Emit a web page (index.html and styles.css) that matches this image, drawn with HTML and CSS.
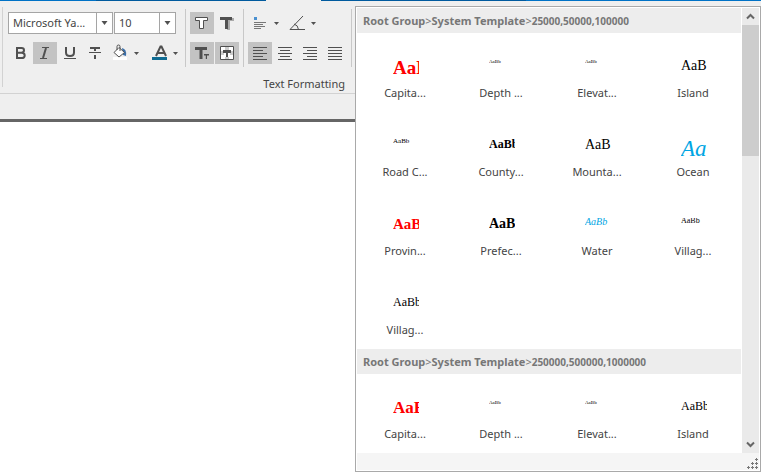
FILE: index.html
```html
<!DOCTYPE html>
<html lang="en">
<head>
<meta charset="utf-8">
<title>Text Formatting</title>
<link rel="stylesheet" href="styles.css">
</head>
<body>
<div class="tabs"><span class="tab-blue"></span><span class="tab-dark"></span><span class="tab-active"></span><span class="tab-dark wide"></span><span class="tab-rest"></span></div>
<header class="ribbon">
  <div class="groups">
    <div class="group fonts">
      <div class="row combos">
        <span class="combo family"><select aria-label="Font"><option>Microsoft Ya...</option></select><svg class="arrow" viewBox="0 0 7 4"><path d="M0.5 0h6L3.5 4z"/></svg></span>
        <span class="combo size"><select aria-label="Font size"><option>10</option></select><svg class="arrow" viewBox="0 0 7 4"><path d="M0.5 0h6L3.5 4z"/></svg></span>
      </div>
      <div class="row">
        <button class="tool" aria-label="Bold"><svg viewBox="0 0 24 22"><path class="l2" d="M9 6v10M8 6h5.500q2.500 0 2.500 2.300T13.500 10.800H9M13.500 10.800q3.200 0 3.200 2.600T13.500 16H8"/></svg></button>
        <button class="tool on" aria-label="Italic"><svg viewBox="0 0 24 22"><path class="l2" d="M13 6l-3 10"/><path class="l1" d="M9 5.500h7M7 16.500h7"/></svg></button>
        <button class="tool" aria-label="Underline"><svg viewBox="0 0 24 22"><path class="l2" d="M8 5v5.500q0 3.500 4 3.500t4-3.500V5"/><path class="l1" d="M6 16.500h12"/></svg></button>
        <button class="tool" aria-label="Strikethrough"><svg viewBox="0 0 24 22"><path class="l2" d="M7 6h10M12 6v3M12 13v4"/><path class="l1" d="M6 10.500h12"/></svg></button>
        <button class="tool split" aria-label="Background color"><svg viewBox="0 0 32 22"><path fill="#3a6ea8" d="M14 6q5 1 4 8l-3-1z"/><path fill="#fff" d="M5 15h14v3H5z"/><path fill="#fff" class="l1" d="M6 10.500l5-5 5.500 5-5.500 4.500z"/><path class="l1" d="M9 8V4.500q0-1.500 1.500-1.500T12 4.500V9"/><path d="M26 10h5l-2.500 3z"/></svg></button>
        <button class="tool split" aria-label="Font color"><svg viewBox="0 0 32 22"><path class="l2" d="M7 14l4.500-9.500h1l4.500 9.500M9 11h6"/><path fill="#0e6b92" d="M3 15h15v3H3z"/><path d="M24 10h5l-2.500 3z"/></svg></button>
      </div>
    </div>
    <div class="group effects">
      <div class="row">
        <button class="tool on" aria-label="Outline"><svg viewBox="0 0 24 22"><path fill="#fff" class="l1" d="M5.500 5.500h12v3h-4v8h-4v-8h-4z"/></svg></button>
        <button class="tool" aria-label="Shadow"><svg viewBox="0 0 24 22"><path fill="#aaa" d="M7 6h12v3h-4v9h-3V9z"/><path d="M5 5h12v3h-4v9h-3V8H5z"/></svg></button>
      </div>
      <div class="row">
        <button class="tool on" aria-label="Fixed size"><svg viewBox="0 0 24 22"><path d="M5 5h12v3h-4.500v9h-3V8H5zM14 12h5v1.500h-2V17h-1.200v-3.500H14z"/></svg></button>
        <button class="tool on" aria-label="Text background"><svg viewBox="0 0 24 22"><path class="l1" fill="#fff" d="M5.500 4.500h13v13h-13z"/><path fill="#ccc" d="M6 9h3v4H6zM15 9h3v4h-3zM10 5h4v3h-4zM10 15h4v2h-4z"/><path d="M8 8h8v3h-3v4h-2v-4H8z"/></svg></button>
      </div>
    </div>
    <div class="group para">
      <div class="row">
        <button class="tool wide" aria-label="Anchor position"><svg viewBox="0 0 37 22"><path fill="#4a90d0" d="M6 5h3v3H6z"/><path class="l1 soft" d="M6 10.500h12M6 12.500h9M6 14.500h11M6 16.500h7"/><path d="M26 10h5l-2.500 3z"/></svg></button>
        <button class="tool wide" aria-label="Rotation"><svg viewBox="0 0 37 22"><path class="l1" d="M18 4L5 17.500h15M9 12q4 1 4.500 5.500"/><path d="M26 10h5l-2.500 3z"/></svg></button>
      </div>
      <div class="row">
        <button class="tool on" aria-label="Align left"><svg viewBox="0 0 24 22"><path class="l1" d="M5 5.500h14M5 8.500h10M5 11.500h14M5 14.500h10M5 17.500h14"/></svg></button>
        <button class="tool" aria-label="Align center"><svg viewBox="0 0 24 22"><path class="l1" d="M5 5.500h14M7 8.500h10M5 11.500h14M7 14.500h10M5 17.500h14"/></svg></button>
        <button class="tool" aria-label="Align right"><svg viewBox="0 0 24 22"><path class="l1" d="M5 5.500h14M9 8.500h10M5 11.500h14M9 14.500h10M5 17.500h14"/></svg></button>
        <button class="tool" aria-label="Justify"><svg viewBox="0 0 24 22"><path class="l1" d="M5 5.500h14M5 8.500h14M5 11.500h14M5 14.500h14M5 17.500h14"/></svg></button>
      </div>
    </div>
  </div>
  <div class="caption">Text Formatting</div>
</header>
<div class="dock"></div>
<main class="canvas"></main>
<section class="gallery" aria-label="Text styles">
  <div class="view">
    <div class="list">
      <h2>Root Group<i>&gt;</i>System Template<i>&gt;</i><span class="scale">25000,50000,100000</span></h2>
      <div class="grid">
        <button class="style"><span class="sample s19 b red">AaBb</span><span class="name">Capita...</span></button>
        <button class="style"><span class="sample s5">AaBb</span><span class="name">Depth ...</span></button>
        <button class="style"><span class="sample s5">AaBb</span><span class="name">Elevat...</span></button>
        <button class="style"><span class="sample s14">AaB</span><span class="name">Island</span></button>
        <button class="style"><span class="sample s7">AaBb</span><span class="name">Road C...</span></button>
        <button class="style"><span class="sample s12 b">AaBb</span><span class="name">County...</span></button>
        <button class="style"><span class="sample s14">AaB</span><span class="name">Mounta...</span></button>
        <button class="style"><span class="sample s23 water">Aa</span><span class="name">Ocean</span></button>
        <button class="style"><span class="sample s15 b red">AaBb</span><span class="name">Provin...</span></button>
        <button class="style"><span class="sample s14 b">AaB</span><span class="name">Prefec...</span></button>
        <button class="style"><span class="sample s10 water">AaBb</span><span class="name">Water</span></button>
        <button class="style"><span class="sample s8">AaBb</span><span class="name">Villag...</span></button>
        <button class="style"><span class="sample s12">AaBb</span><span class="name">Villag...</span></button>
      </div>
      <h2>Root Group<i>&gt;</i>System Template<i>&gt;</i><span class="scale">250000,500000,1000000</span></h2>
      <div class="grid">
        <button class="style"><span class="sample s17 b red">AaBb</span><span class="name">Capita...</span></button>
        <button class="style"><span class="sample s5">AaBb</span><span class="name">Depth ...</span></button>
        <button class="style"><span class="sample s5">AaBb</span><span class="name">Elevat...</span></button>
        <button class="style"><span class="sample s12">AaBb</span><span class="name">Island</span></button>
      </div>
    </div>
    <div class="scrollbar">
      <button class="step" aria-label="Scroll up"><svg viewBox="0 0 17 17"><path d="M5 10.500l3.500-3.500 3.500 3.500"/></svg></button>
      <div class="thumb"></div>
      <button class="step down" aria-label="Scroll down"><svg viewBox="0 0 17 17"><path d="M5 6.500l3.500 3.500 3.500-3.500"/></svg></button>
    </div>
  </div>
  <div class="footer"><svg class="grip" viewBox="0 0 12 12"><path d="M9.500 0v3M8 1.500h3M9.500 4v3M8 5.500h3M5.500 4v3M4 5.500h3M9.500 8v3M8 9.500h3M5.500 8v3M4 9.500h3M1.500 8v3M0 9.500h3"/></svg></div>
</section>
</body>
</html>
```
FILE: styles.css
```css
* { box-sizing: border-box; }

body {
  margin: 0;
  min-height: 100vh;
  display: flex;
  flex-direction: column;
  position: relative;
  overflow: hidden;
  background: #fff;
  color: #444;
  font: 11px/16px "Noto Sans", "Open Sans", sans-serif;
}

button {
  margin: 0;
  padding: 0;
  border: 0;
  background: none;
  color: inherit;
  font: inherit;
}

svg { display: block; fill: #505050; }

.tabs { display: flex; height: 1px; }
.tab-blue { width: 96px; background: #0072c6; }
.tab-dark { width: 170px; background: #005a9e; }
.tab-active { width: 55px; background: #efefef; }
.tab-dark.wide { width: 205px; }
.tab-rest { flex: 1; background: #0072c6; }

.ribbon {
  height: 93px;
  padding: 6px 0 0 2px;
  background: #efefef;
  border-bottom: 1px solid #d2d2d2;
}

.groups {
  display: flex;
  align-items: flex-start;
  border-left: 1px solid #d2d2d2;
  height: 80px;
  padding-top: 2px;
}

.group {
  display: flex;
  flex-direction: column;
  gap: 8px;
  height: 58px;
  padding: 3px 4px 0;
  border-right: 1px solid #c8c8c8;
}
.fonts { width: 183px; padding-left: 5px; }
.effects { width: 58px; }
.para { width: 108px; }

.row { display: flex; gap: 1px; }

.tool { width: 24px; height: 22px; flex: none; }
.tool.on { background: #c3c3c3; }
.tool.split { width: 36px; }
.tool.wide { width: 36px; }
.tool svg { height: 22px; }
.tool.split svg { width: 32px; }
.tool.split + .tool.split { padding-left: 4px; }
.tool.wide svg { width: 37px; }

.l1, .l2 { stroke: #505050; stroke-width: 1; }
.l2 { stroke-width: 2; }
.l1:not([fill]), .l2 { fill: none; }
.soft { stroke: #777; }

.combo {
  display: flex;
  align-items: center;
  height: 22px;
  background: #fff;
  border: 1px solid #a5a5a5;
}
.family { width: 105px; }
.size { width: 62px; }
.combo select {
  flex: 1;
  min-width: 0;
  height: 20px;
  padding: 0 0 0 4px;
  border: 0;
  border-right: 1px solid #a5a5a5;
  appearance: none;
  background: #fff;
  color: #444;
  font: inherit;
}
.arrow { width: 7px; height: 4px; margin: 0 4px; flex: none; }

.caption { width: 343px; margin-top: -11px; text-align: right; }

.dock {
  height: 28px;
  background: #efefef;
  border-bottom: 3px solid #666;
}

.canvas { flex: 1; }

.gallery {
  position: absolute;
  top: 6px;
  right: 0;
  bottom: 0;
  left: 355px;
  display: flex;
  flex-direction: column;
  padding: 1px;
  border: 1px solid #a9a9a9;
  background: #fff;
}

.view { flex: 1; min-height: 0; display: flex; gap: 1px; }
.list { flex: 1; overflow: hidden; }

h2 {
  margin: 0;
  height: 25px;
  padding-left: 6px;
  background: #ededed;
  color: #777;
  font-size: 11px;
  line-height: 25px;
  font-weight: 700;
  white-space: nowrap;
}
h2 i { font-style: normal; font-weight: 400; }
.scale { font-size: 10px; }

.grid { display: grid; grid-template-columns: repeat(4, 1fr); }

.style {
  height: 79px;
  padding-top: 27px;
  display: flex;
  flex-direction: column;
  align-items: center;
}
.sample {
  width: 26px;
  height: 25px;
  margin-left: 2px;
  overflow: hidden;
  color: #000;
  font-family: "Liberation Serif", serif;
  line-height: 0.85;
  text-align: left;
  white-space: nowrap;
}
.name { color: #444; }

.b { font-weight: 700; }
.red { color: #f00; }
.water { color: #00a5e3; font-style: italic; }
.s5 { font-size: 5px; }
.s7 { font-size: 7px; }
.s8 { font-size: 8px; }
.s10 { font-size: 10px; }
.s12 { font-size: 12px; }
.s14 { font-size: 14px; }
.s15 { font-size: 15px; }
.s17 { font-size: 17px; }
.s19 { font-size: 19px; }
.s23 { font-size: 23px; }

.scrollbar {
  width: 17px;
  display: flex;
  flex-direction: column;
  background: #eaeaea;
}
.step { height: 17px; }
.step svg { fill: none; stroke: #666; stroke-width: 2; }
.step.down { margin-top: auto; }
.thumb { height: 131px; background: #cdcdcd; }

.footer {
  height: 17px;
  display: flex;
  align-items: flex-end;
  justify-content: flex-end;
  background: #f5f5f5;
}
.grip { width: 12px; height: 12px; fill: none; stroke: #777; }
```
